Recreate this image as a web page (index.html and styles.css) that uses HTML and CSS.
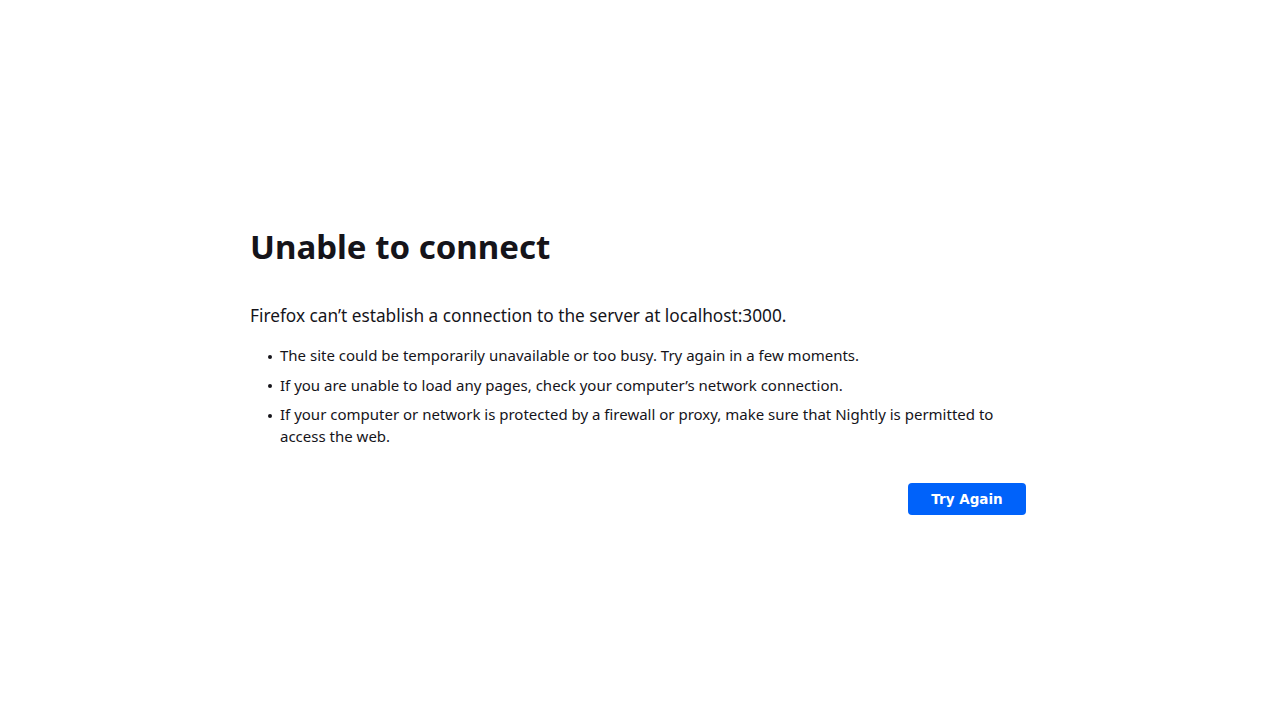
FILE: index.html
```html
<!DOCTYPE html>
<html lang="en">
<head>
<meta charset="utf-8">
<title>Problem loading page</title>
<link rel="stylesheet" href="styles.css">
</head>
<body>
<main class="container">
  <h1 class="title">Unable to connect</h1>
  <p class="short-desc">Firefox can’t establish a connection to the server at localhost:3000.</p>
  <ul class="long-desc">
    <li>The site could be temporarily unavailable or too busy. Try again in a few moments.</li>
    <li>If you are unable to load any pages, check your computer’s network connection.</li>
    <li>If your computer or network is protected by a firewall or proxy, make sure that Nightly is permitted to access the web.</li>
  </ul>
  <div class="actions">
    <button class="primary">Try Again</button>
  </div>
</main>
</body>
</html>
```

FILE: styles.css
```css
html, body {
  margin: 0;
  padding: 0;
  background: #ffffff;
  color: #15141a;
  font-family: "Noto Sans", sans-serif;
  font-size: 15px;
}
.container {
  width: 780px;
  margin: 0 auto;
  padding-top: 222px;
  box-sizing: border-box;
}
.title {
  margin: 0;
  font-size: 33px;
  font-weight: 700;
  line-height: 50px;
}
.short-desc {
  margin: 31px 0 0 0;
  font-size: 17.25px;
  line-height: 26px;
}
.long-desc {
  margin: 15px 0 0 0;
  padding-left: 30px;
  line-height: 22px;
  list-style: none;
}
.long-desc li {
  margin-bottom: 7.5px;
}
.long-desc li::before {
  content: "";
  display: inline-block;
  width: 4px;
  height: 4px;
  border-radius: 50%;
  background: currentColor;
  margin-left: -12px;
  margin-right: 8px;
  vertical-align: middle;
}
.long-desc li:last-child {
  margin-bottom: 0;
}
.actions {
  display: flex;
  justify-content: flex-end;
  margin-top: 36px;
  padding-right: 4px;
}
.primary {
  background: #0062fa;
  color: #ffffff;
  border: none;
  border-radius: 4px;
  width: 118px;
  height: 32px;
  font-family: "DejaVu Sans", sans-serif;
  font-weight: 700;
  font-size: 13.5px;
  padding: 0;
}
```
